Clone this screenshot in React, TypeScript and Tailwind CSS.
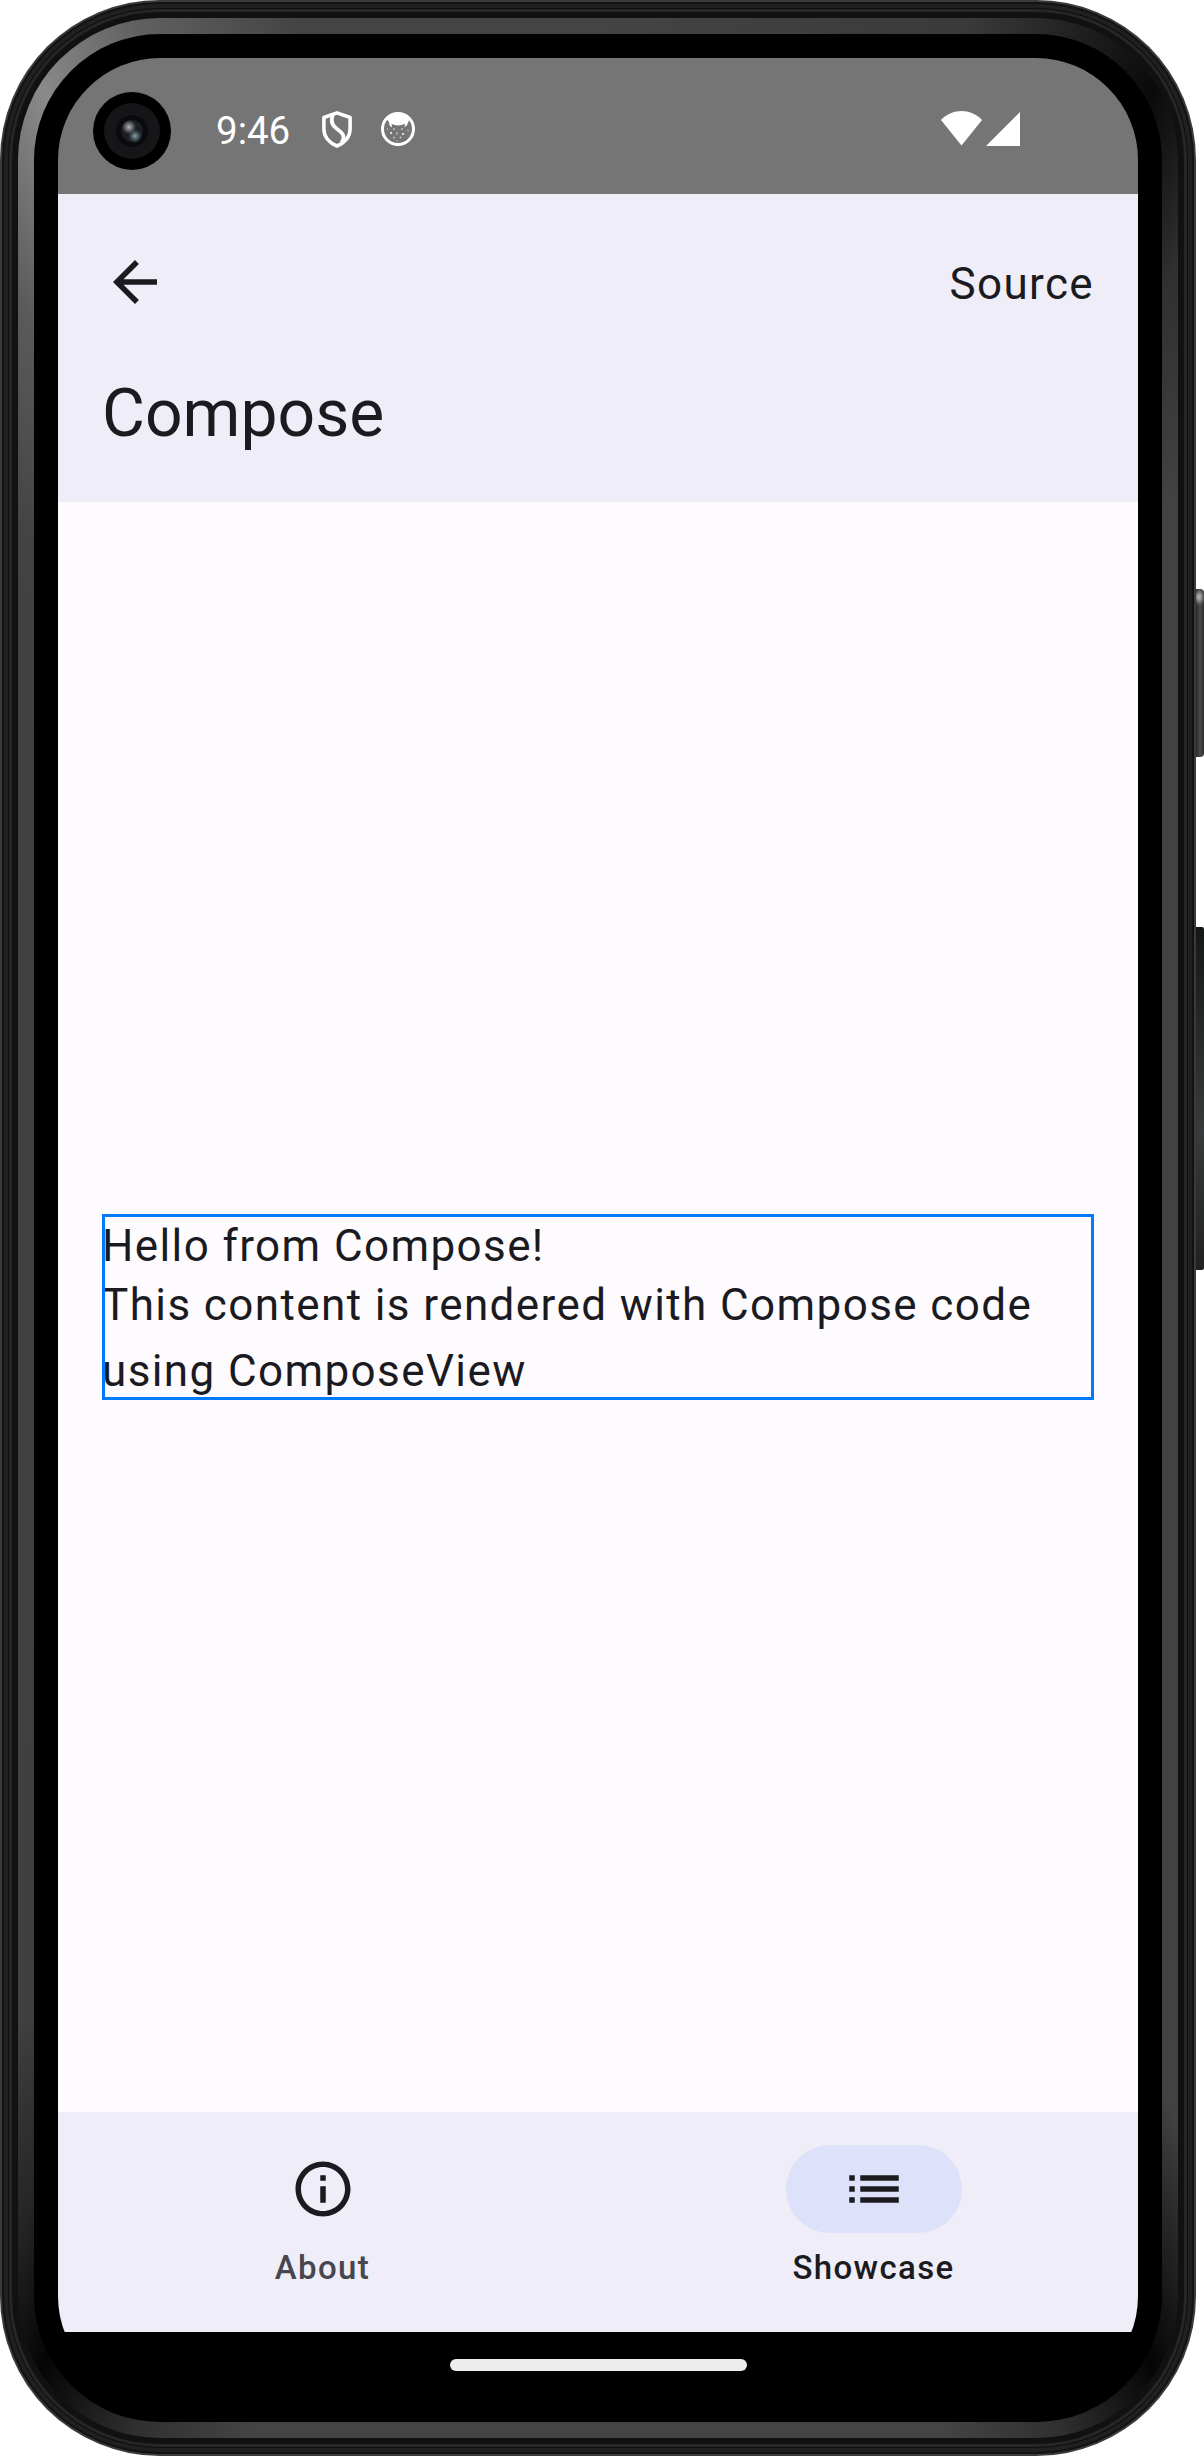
import type { ReactNode } from "react";

function StatusBar() {
  return (
    <div className="flex h-[136px] shrink-0 items-center bg-[#757575] pl-[35px] pr-[118px] text-white">
      <div className="mt-[10px] flex size-[78px] items-center justify-center rounded-full bg-black">
        <svg viewBox="0 0 56 56" className="size-[56px]">
          <defs>
            <radialGradient id="lensA">
              <stop offset="0" stopColor="#b4b4b4" />
              <stop offset="1" stopColor="#b4b4b4" stopOpacity="0" />
            </radialGradient>
            <radialGradient id="lensB">
              <stop offset="0" stopColor="#8fa3ab" />
              <stop offset="1" stopColor="#5d727c" stopOpacity="0" />
            </radialGradient>
          </defs>
          <circle cx="28" cy="28" r="28" fill="#161618" />
          <circle cx="28" cy="28" r="16" fill="#0b0b0d" />
          <circle cx="28" cy="28" r="11" fill="#1b1e24" />
          <circle cx="25" cy="24" r="7" fill="url(#lensA)" />
          <circle cx="31" cy="33" r="7" fill="url(#lensB)" />
        </svg>
      </div>
      <span className="ml-[45px] mt-[10px] w-[76px] text-[38.5px] leading-none">9:46</span>
      <svg viewBox="0 0 30 37" className="ml-[30px] mt-[7px] h-[37px] w-[30px]" fill="none" stroke="#fff">
        <path
          d="M15 1.9 L28.1 6.5 V18 C28.1 26 22.5 32 15 35 C7.5 32 1.9 26 1.9 18 V6.5 Z"
          strokeWidth="3.6"
          strokeLinejoin="round"
        />
        <path
          d="M10.8 3.5 C8.3 11 10.5 14.5 15 18 C21.5 22.5 23.5 25.5 19.5 31.5"
          strokeWidth="3.8"
        />
      </svg>
      <svg viewBox="0 0 34 34" className="ml-[29px] mt-[6px] size-[34px]" fill="#fff">
        <circle cx="17" cy="17" r="15.5" fill="none" stroke="#fff" strokeWidth="3" />
        <path d="M5 6 C10 0 24 0 29 6 L26 13 L23.5 15.5 L24 11.8 C19 14 15 14 10.5 11.8 L11 15.5 L8.5 13.5 L8 10 Z" />
        <g fillOpacity=".6">
          <circle cx="13" cy="17" r=".9" />
          <circle cx="21" cy="17" r=".9" />
          <circle cx="6.5" cy="17" r=".7" />
          <circle cx="27" cy="18.5" r=".7" />
          <circle cx="10" cy="21" r="1" fillOpacity="1" />
          <circle cx="16" cy="21.5" r=".9" />
          <circle cx="22" cy="22" r="1" fillOpacity="1" />
          <circle cx="13" cy="25.5" r=".9" />
          <circle cx="19.5" cy="25.5" r=".9" />
          <circle cx="16" cy="29" r=".7" />
        </g>
      </svg>
      <svg viewBox="0 0 41 35" className="ml-auto mt-[5px] h-[35px] w-[41px]" fill="#fff">
        <path d="M0 9 C11.5 -2.9 29.5 -2.9 41 9 L20.5 34.6 Z" />
      </svg>
      <svg viewBox="0 0 34 34" className="ml-[4px] mt-[6px] size-[34px]" fill="#fff">
        <path d="M34 0 V34 H0 Z" />
      </svg>
    </div>
  );
}

function TopAppBar() {
  return (
    <header className="h-[308px] shrink-0 bg-[#efedf7] px-[44px]">
      <div className="flex h-[176px] items-center justify-between">
        <svg viewBox="0 0 24 24" className="size-[66px]" fill="#1b1b1f">
          <path d="M20 11H7.83l5.59-5.59L12 4l-8 8 8 8 1.41-1.41L7.83 13H20v-2z" />
        </svg>
        <span className="pt-[4px] text-[44px] leading-[66px] tracking-[1.375px]">Source</span>
      </div>
      <h1 className="text-[66px] leading-[88px]">Compose</h1>
    </header>
  );
}

function NavItem({ label, active, children }: { label: string; active?: boolean; children: ReactNode }) {
  return (
    <div className="flex flex-col items-center pt-[33px]">
      <div
        className={`flex h-[88px] w-[176px] items-center justify-center rounded-full ${active ? "bg-[#dde1f9]" : ""}`}
      >
        <svg viewBox="0 0 24 24" className="size-[66px]" fill="#1b1b1f">
          {children}
        </svg>
      </div>
      <span
        className={`mt-[13px] text-[33px] font-medium leading-[44px] tracking-[1.375px] ${active ? "text-[#1b1b1f]" : "text-[#46464f]"}`}
      >
        {label}
      </span>
    </div>
  );
}

function Screen() {
  return (
    <div className="flex h-[2340px] w-[1080px] flex-col overflow-hidden rounded-[102px] bg-black text-[#1b1b1f]">
      <StatusBar />
      <TopAppBar />
      <main className="flex flex-1 items-center bg-[#fefbff] px-[44px]">
        <div className="h-[186px] w-full text-[44px] tracking-[1.4px] outline-[3px] -outline-offset-3 outline-[#007bff]">
          <p className="h-[58px] leading-[64px]">Hello from Compose!</p>
          <p className="leading-[66px]">This content is rendered with Compose code using ComposeView</p>
        </div>
      </main>
      <nav className="grid h-[220px] shrink-0 grid-cols-2 gap-[22px] bg-[#efedf7]">
        <NavItem label="About">
          <path d="M11 7h2v2h-2zm0 4h2v6h-2zm1-9C6.48 2 2 6.48 2 12s4.48 10 10 10 10-4.48 10-10S17.52 2 12 2zm0 18c-4.41 0-8-3.59-8-8s3.59-8 8-8 8 3.59 8 8-3.59 8-8 8z" />
        </NavItem>
        <NavItem label="Showcase" active>
          <path d="M3 13h2v-2H3v2zm0 4h2v-2H3v2zm0-8h2V7H3v2zm4 4h14v-2H7v2zm0 4h14v-2H7v2zM7 7v2h14V7H7z" />
        </NavItem>
      </nav>
      <div className="flex h-[66px] shrink-0 items-center justify-center">
        <div className="h-[12px] w-[297px] rounded-full bg-[#ededed]" />
      </div>
    </div>
  );
}

export default function App() {
  return (
    <div className="flex h-[2456px] w-[1204px] items-start bg-white font-[Roboto,sans-serif]">
      <div className="rounded-[160px] bg-[#3a3a3a] p-[2px]">
        <div className="rounded-[158px] bg-[#121212] p-[2px]">
          <div className="rounded-[156px] bg-[#202020] p-[4px]">
            <div className="rounded-[152px] bg-[#0e0e0e] p-px">
              <div className="rounded-[151px] bg-[#262626] p-[3px]">
                <div className="rounded-[148px] bg-[#111111] p-[6px]">
                  <div className="rounded-[142px] bg-[conic-gradient(#444_0deg,#3a3a3a_17deg,#0a0a0a_26deg,#303030_31deg,#424242_38deg,#424242_147deg,#202020_151deg,#050505_154deg,#303030_159deg,#444_164deg,#444_196deg,#303030_201deg,#050505_206deg,#252525_210deg,#404040_216deg,#424242_320deg,#5a5a5a_328deg,#8a8a8a_334deg,#606060_339deg,#444_346deg,#444_360deg)] p-[16px]">
                    <div className="rounded-[126px] bg-black p-[24px]">
                      <Screen />
                    </div>
                  </div>
                </div>
              </div>
            </div>
          </div>
        </div>
      </div>
      <div className="flex w-[8px] flex-col pt-[589px]">
        <div className="h-[168px] overflow-hidden rounded-r-[4px] bg-linear-to-r from-[#2a2a2a] via-[#4c4c4c] to-[#2e2e2e]">
          <div className="mt-[3px] h-[10px] w-[6px] rounded-full bg-[#c4c4c4] blur-[2px]" />
        </div>
        <div className="mt-[170px] h-[343px] rounded-r-[2px] bg-linear-to-b from-[#161818] via-[#383b3b] via-60% to-[#202020]" />
      </div>
    </div>
  );
}
